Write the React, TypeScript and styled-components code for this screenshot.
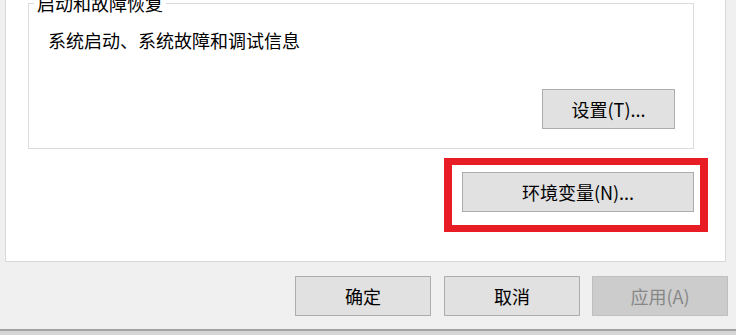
import React from "react";
import styled, { createGlobalStyle } from "styled-components";

const Global = createGlobalStyle`
  html, body { margin: 0; padding: 0; }
  body {
    width: 736px;
    height: 335px;
    overflow: hidden;
    background: #f0f0f0;
    font-family: "Noto Sans CJK SC", "Noto Sans", "Liberation Sans", sans-serif;
    color: #000;
  }
`;

const Page = styled.div`
  display: flex;
  flex-direction: column;
  height: 335px;
`;

const TabPanel = styled.div`
  margin-left: 5px;
  width: 721px;
  height: 264px;
  box-sizing: border-box;
  background: #fff;
  border: 1px solid #d9d9d9;
  border-top: none;
  padding: 3px 31px 0 22px;
  display: flex;
  flex-direction: column;
`;

const GroupBox = styled.div`
  position: relative;
  height: 146px;
  border: 1px solid #dcdcdc;
  box-sizing: border-box;
  display: flex;
  flex-direction: column;
  justify-content: space-between;
  padding: 24px 18px 19px 19px;
`;

const Legend = styled.span`
  position: absolute;
  left: 5px;
  top: -13px;
  padding: 0 3px;
  background: #fff;
  font-size: 18px;
  line-height: 24px;
`;

const Description = styled.div`
  font-size: 18px;
  line-height: 24px;
`;

const Button = styled.button<{ $w: number; $disabled?: boolean }>`
  width: ${(p) => p.$w}px;
  height: 40px;
  box-sizing: border-box;
  background: ${(p) => (p.$disabled ? "#cccccc" : "#e1e1e1")};
  border: 1px solid ${(p) => (p.$disabled ? "#bfbfbf" : "#adadad")};
  color: ${(p) => (p.$disabled ? "#878787" : "#000")};
  font-family: inherit;
  font-size: 18px;
  line-height: 24px;
  padding: 0;
  display: flex;
  align-items: center;
  justify-content: center;
`;

const ButtonRow = styled.div`
  display: flex;
  justify-content: flex-end;
`;

const EnvRow = styled.div`
  display: flex;
  justify-content: flex-end;
  margin-top: 9px;
  margin-right: -14px;
`;

const Highlight = styled.div`
  border: solid #e81c24;
  border-width: 7px 8px;
  padding: 7px 6px 13px 10px;
  background: #fff;
`;

const Footer = styled.div`
  display: flex;
  justify-content: flex-end;
  gap: 12px;
  padding: 14px 8px 0 0;
  height: 67px;
  box-sizing: border-box;
  & > :first-child { margin-right: 1px; }
`;

const BottomEdge = styled.div`
  height: 4px;
  border-top: 2px solid #a2a2a2;
  background: #d6d6d6;
`;

export default function App() {
  return (
    <>
      <Global />
      <Page>
        <TabPanel>
          <GroupBox>
            <Legend>启动和故障恢复</Legend>
            <Description>系统启动、系统故障和调试信息</Description>
            <ButtonRow>
              <Button $w={133}>设置(T)...</Button>
            </ButtonRow>
          </GroupBox>
          <EnvRow>
            <Highlight>
              <Button $w={232}>环境变量(N)...</Button>
            </Highlight>
          </EnvRow>
        </TabPanel>
        <Footer>
          <Button $w={136}>确定</Button>
          <Button $w={136}>取消</Button>
          <Button $w={136} $disabled>应用(A)</Button>
        </Footer>
        <BottomEdge />
      </Page>
    </>
  );
}
